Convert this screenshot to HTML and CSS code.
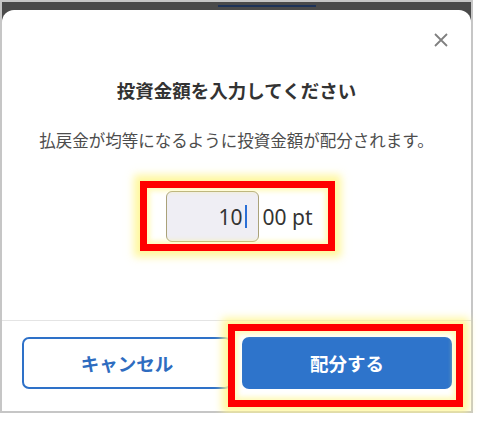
FILE: index.html
```html
<!DOCTYPE html>
<html lang="ja">
<head>
    <meta charset="UTF-8">
    <meta name="viewport" content="width=device-width, initial-scale=1.0">
    <title>投資金額を入力してください</title>
    <link rel="stylesheet" href="styles.css">
</head>
<body>
    <div class="frame">
        <div class="topbar">
            <span class="handle"></span>
        </div>
        <div class="modal">
            <div class="close-row">
                <svg class="close" width="14" height="14" viewBox="0 0 14 14">
                    <path d="M1 1 L13 13 M13 1 L1 13" stroke="#808080" stroke-width="1.8" fill="none"/>
                </svg>
            </div>
            <h1 class="title">投資金額を入力してください</h1>
            <p class="lead">払戻金が均等になるように投資金額が配分されます。</p>
            <div class="amount">
                <div class="amount-row">
                    <div class="amount-input">10<span class="caret"></span></div>
                    <span class="amount-unit">00 pt</span>
                </div>
                <span class="mark mark-amount"></span>
            </div>
            <div class="footer">
                <button class="btn btn-cancel">キャンセル</button>
                <div class="submit-wrap">
                    <button class="btn btn-submit">配分する</button>
                    <span class="mark mark-submit"></span>
                </div>
            </div>
        </div>
    </div>
</body>
</html>
```

FILE: styles.css
```css
body {
    margin: 0;
    background: #ffffff;
    font-family: "Noto Sans CJK JP", "Noto Sans", sans-serif;
}

.frame {
    width: 473px;
    height: 413px;
    box-sizing: border-box;
    border: 2px solid #c6c6c6;
    background: #4a4a4a;
    display: flex;
    flex-direction: column;
}

.topbar {
    height: 8px;
    display: flex;
    align-items: center;
}

.handle {
    width: 98px;
    height: 2px;
    margin-left: 216px;
    background: #1d3258;
}

.modal {
    flex: 1;
    background: #ffffff;
    border-radius: 12px 12px 0 0;
    display: flex;
    flex-direction: column;
    align-items: center;
}

.close-row {
    align-self: stretch;
    display: flex;
    justify-content: flex-end;
    padding: 23px 23px 0 0;
}

.close {
    display: block;
}

.title {
    margin: 30px 0 0;
    font-size: 18.5px;
    line-height: 26px;
    font-weight: 700;
    color: #333333;
}

.lead {
    margin: 25px 0 0;
    font-size: 16.5px;
    line-height: 24px;
    color: #4d4d4d;
}

.amount {
    position: relative;
    margin: 39px 0 0 5px;
}

.amount-row {
    display: flex;
    align-items: center;
    gap: 4px;
    font-family: "Noto Sans", sans-serif;
    font-size: 21px;
    color: #333333;
}

.amount-input {
    width: 93px;
    height: 51px;
    box-sizing: border-box;
    border: 1px solid #aaa27a;
    border-radius: 6px;
    background: #efeef4;
    display: flex;
    align-items: center;
    justify-content: flex-end;
    padding-right: 11px;
}

.caret {
    width: 2px;
    height: 23px;
    margin-left: 2px;
    background: #2a6fd6;
}

.mark {
    position: absolute;
    border: 7px solid #ff0000;
    box-shadow: 0 0 8px 6px rgba(255, 246, 140, 0.85), inset 0 0 5px 3px rgba(255, 246, 140, 0.6);
    pointer-events: none;
}

.mark-amount {
    top: -10px;
    right: -23px;
    bottom: -9px;
    left: -26px;
}

.footer {
    margin-top: auto;
    align-self: stretch;
    border-top: 1px solid #e4e4e4;
    padding: 16px 19px 22px 20px;
    display: grid;
    grid-template-columns: 1fr 1fr;
    gap: 10px;
}

.btn {
    height: 52px;
    border-radius: 7px;
    font-family: inherit;
    font-size: 18.5px;
    font-weight: 700;
    cursor: pointer;
}

.btn-cancel {
    background: #ffffff;
    border: 2px solid #2e71c8;
    color: #2e6cc0;
}

.submit-wrap {
    position: relative;
    display: flex;
}

.btn-submit {
    flex: 1;
    border: none;
    background: #2e74cb;
    color: #ffffff;
}

.mark-submit {
    top: -13px;
    right: -11px;
    bottom: -18px;
    left: -14px;
}
```
